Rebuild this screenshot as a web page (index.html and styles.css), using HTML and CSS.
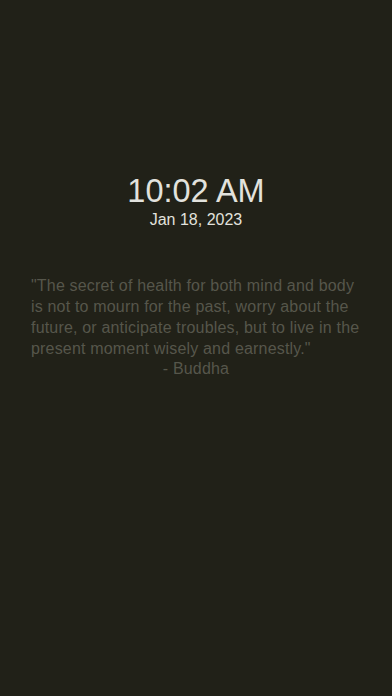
FILE: index.html
```html
<!DOCTYPE html>
<html>
<head>
<meta charset="utf-8">
<link rel="stylesheet" href="styles.css">
</head>
<body>
<main class="screen">
  <section class="clock">
    <div class="time">10:02 AM</div>
    <div class="date">Jan 18, 2023</div>
  </section>
  <section class="quote">
    <p class="quote-text">"The secret of health for both mind and body is not to mourn for the past, worry about the future, or anticipate troubles, but to live in the present moment wisely and earnestly."</p>
    <p class="quote-author">- Buddha</p>
  </section>
</main>
</body>
</html>
```
FILE: styles.css
```css
html, body {
  margin: 0;
  padding: 0;
  background: #212118;
}
.screen {
  width: 392px;
  height: 696px;
  display: flex;
  flex-direction: column;
  align-items: center;
  font-family: "Liberation Sans", Arial, sans-serif;
  padding-top: 172px;
  box-sizing: border-box;
}
.clock {
  display: flex;
  flex-direction: column;
  align-items: center;
}
.time {
  color: #e2e2dd;
  font-size: 32.5px;
  line-height: 38px;
}
.date {
  color: #e2e2dd;
  font-size: 16px;
  line-height: 20px;
}
.quote {
  width: 330px;
  margin-top: 45px;
}
.quote-text {
  margin: 0;
  color: #56564b;
  font-size: 16px;
  line-height: 21px;
  letter-spacing: 0.18px;
  text-align: left;
}
.quote-author {
  margin: 0;
  color: #56564b;
  font-size: 16px;
  line-height: 19px;
  letter-spacing: 0.18px;
  text-align: center;
}
```
